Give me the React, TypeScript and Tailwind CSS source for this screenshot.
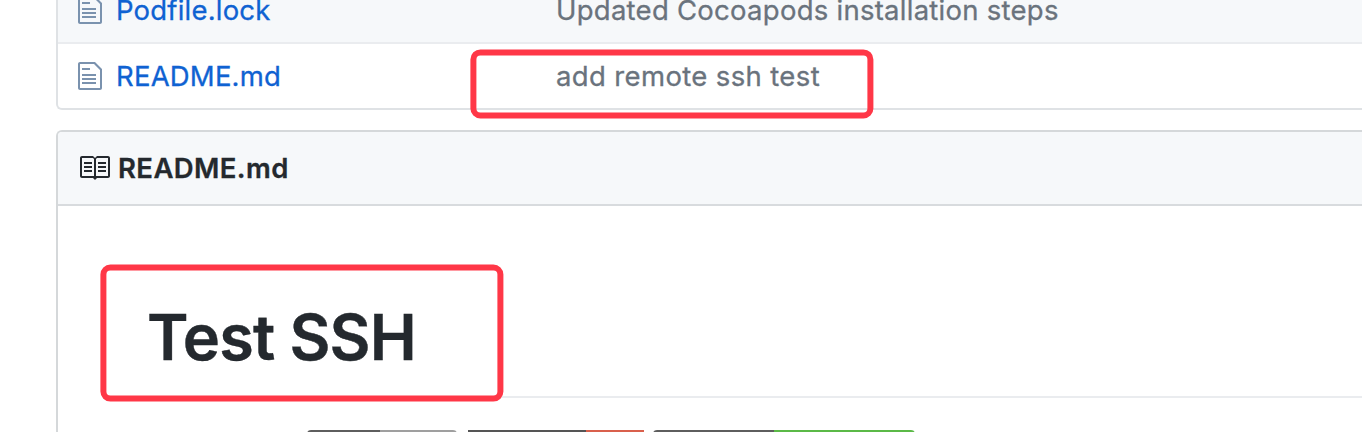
import React from "react";

function FileIcon() {
  return (
    <svg className="block h-[32px] w-[24px] shrink-0" viewBox="0 0 12 16" fill="#7a92ae" aria-hidden="true">
      <path
        fillRule="evenodd"
        d="M6 5H2V4h4v1zM2 8h7V7H2v1zm0 2h7V9H2v1zm0 2h7v-1H2v1zm10-7.5V14c0 .55-.45 1-1 1H1c-.55 0-1-.45-1-1V2c0-.55.45-1 1-1h7.5L12 4.5zM11 5L8 2H1v12h10V5z"
      />
    </svg>
  );
}

function BookIcon() {
  return (
    <svg className="block h-[32px] w-[32px] shrink-0" viewBox="0 0 16 16" fill="#24292e" aria-hidden="true">
      <path
        fillRule="evenodd"
        d="M3 5h4v1H3V5zm0 3h4V7H3v1zm0 2h4V9H3v1zm11-5h-4v1h4V5zm0 2h-4v1h4V7zm0 2h-4v1h4V9zm2-6v9c0 .55-.45 1-1 1H9.5l-1 1-1-1H2c-.55 0-1-.45-1-1V3c0-.55.45-1 1-1h5.5l1 1 1-1H15c.55 0 1 .45 1 1zm-8 .5L7.5 3H2v9h6V3.5zm7-.5H9.5l-.5.5V12h6V3z"
      />
    </svg>
  );
}

type RowProps = { name: string; message: string; className: string; nameClass: string; messageClass: string };

function FileRow({ name, message, className, nameClass, messageClass }: RowProps) {
  return (
    <div
      className={`flex h-[66px] shrink-0 items-center pl-[20px] text-[27.5px] leading-[32px] [-webkit-text-stroke:0.3px_currentColor] ${className}`}
    >
      <FileIcon />
      <a className={`ml-[14px] w-[440px] shrink-0 text-[#0f62d2] ${nameClass}`}>{name}</a>
      <span className={`text-[#6a737d] ${messageClass}`}>{message}</span>
    </div>
  );
}

export default function App() {
  return (
    <div className="relative flex h-[432px] w-[1362px] flex-col overflow-hidden bg-white pl-[56px] font-['Inter','Liberation_Sans',sans-serif] whitespace-nowrap text-[#24292e]">
      <div className="flex h-[110px] shrink-0 flex-col justify-end overflow-hidden rounded-bl-[6px] border-b-2 border-l-2 border-[#dfe2e5]">
        <FileRow
          name="Podfile.lock"
          message="Updated Cocoapods installation steps"
          className="bg-[#f6f8fa] pt-[2px]"
          nameClass="tracking-[0.2px]"
          messageClass="tracking-[0.26px]"
        />
        <FileRow
          name="README.md"
          message="add remote ssh test"
          className="border-t-2 border-t-[#eaecef]"
          nameClass="tracking-[0.2px]"
          messageClass="tracking-[0.36px]"
        />
      </div>

      <div className="mt-[20px] flex h-[302px] shrink-0 flex-col rounded-tl-[6px] border-t-2 border-l-2 border-[#d5d8da]">
        <div className="flex h-[74px] shrink-0 items-center rounded-tl-[4px] border-b-2 border-[#d8dbde] bg-[#f6f8fa] pl-[20px]">
          <BookIcon />
          <h3 className="ml-[8px] text-[27.5px] leading-[32px] font-semibold tracking-[0.4px] [-webkit-text-stroke:0.3px_currentColor]">
            README.md
          </h3>
        </div>
        <div className="flex flex-col pl-[90px]">
          <h1 className="-ml-px h-[192px] border-b-2 border-[#eaecef] pt-[91px] text-[63px] leading-[80px] font-semibold tracking-[-0.85px] [-webkit-text-stroke:0.4px_currentColor]">
            Test SSH
          </h1>
          <div className="mt-[32px] flex h-[40px] pl-[159px]">
            <div className="flex w-[150px] overflow-hidden rounded-[4px]">
              <div className="w-[73px] bg-[#5e5e5e]" />
              <div className="flex-1 bg-[#9f9f9f]" />
            </div>
            <div className="ml-[11px] flex w-[176px]">
              <div className="w-[118px] bg-[#555555]" />
              <div className="flex-1 bg-[#d9604c]" />
            </div>
            <div className="ml-[9px] flex w-[262px] overflow-hidden rounded-[4px]">
              <div className="w-[121px] bg-[#5e5e5e]" />
              <div className="flex-1 bg-[#5bb947]" />
            </div>
          </div>
        </div>
      </div>

      <div className="absolute top-[50px] left-[471px] h-[69px] w-[403px] translate-x-[-0.6px] translate-y-[-0.6px] rounded-[10px] border-[6px] border-[#ff3747]" />
      <div className="absolute top-[265px] left-[101px] h-[137px] w-[403px] translate-x-[-0.6px] translate-y-[-0.4px] rounded-[10px] border-[6px] border-[#ff3747]" />
    </div>
  );
}
